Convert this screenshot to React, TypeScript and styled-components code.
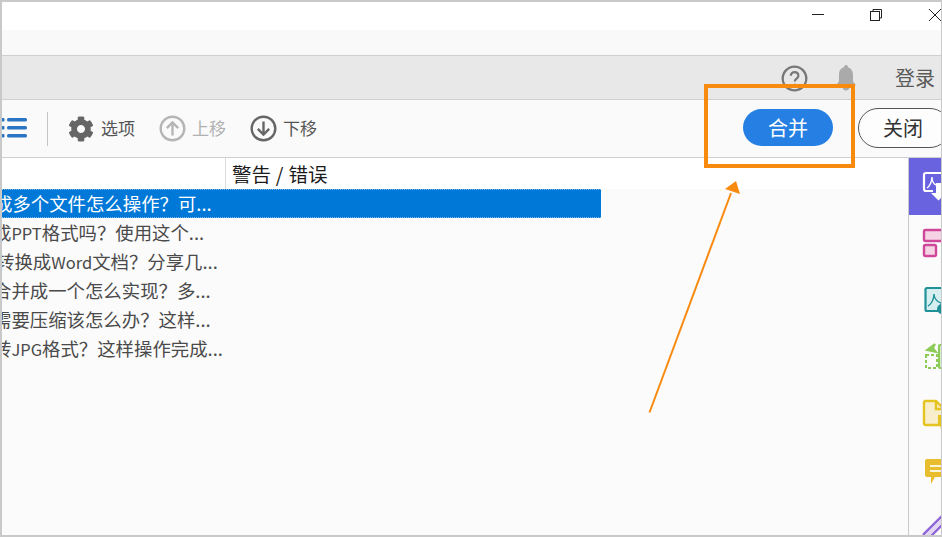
import React from "react";
import styled, { createGlobalStyle } from "styled-components";
import { FaCog } from "react-icons/fa";

const FONT = `"Noto Sans CJK SC", "Noto Sans", sans-serif`;

const GlobalStyle = createGlobalStyle`
  html, body {
    margin: 0;
    padding: 0;
    background: #fff;
    overflow: hidden;
  }
`;

const styles = {
  Frame: styled.div`
    position: relative;
    width: 942px;
    height: 537px;
    box-sizing: border-box;
    border-top: 2px solid #c9c9c9;
    border-left: 2px solid #c9c9c9;
    border-right: 1px solid #c9c9c9;
    border-bottom: 2px solid #c9c9c9;
    display: flex;
    flex-direction: column;
    overflow: hidden;
    font-family: ${FONT};
    background: #fbfbfb;
  `,
  TitleBar: styled.div`
    height: 28px;
    flex: none;
    background: #fff;
    display: flex;
    justify-content: flex-end;
  `,
  WinButton: styled.div<{ $width: number }>`
    width: ${p => p.$width}px;
    height: 28px;
    display: flex;
    align-items: flex-start;
    padding-top: 6px;
    box-sizing: border-box;
  `,
  MenuBar: styled.div`
    height: 26px;
    flex: none;
    box-sizing: border-box;
    background: #f9f9f9;
    border-bottom: 1px solid #cfcfcf;
  `,
  UserBar: styled.div`
    height: 44px;
    flex: none;
    box-sizing: border-box;
    background: #e8e8e8;
    border-bottom: 1px solid #cfcfcf;
    display: flex;
    align-items: center;
    justify-content: flex-end;
    padding-right: 6px;
    padding-top: 1px;
  `,
  Login: styled.span`
    font-size: 20px;
    color: #5a5a5a;
    margin-left: 38px;
    line-height: 44px;
    margin-top: -1px;
  `,
  BellSlot: styled.div`
    margin-left: 27px;
    display: flex;
  `,
  Toolbar: styled.div`
    height: 58px;
    flex: none;
    box-sizing: border-box;
    background: #fafafa;
    border-bottom: 1px solid #cfcfcf;
    display: flex;
    align-items: center;
  `,
  Divider: styled.div`
    width: 1px;
    height: 34px;
    background: #c4c4c4;
    margin: 0 20px 0 20px;
  `,
  ToolItem: styled.div<{ $disabled?: boolean }>`
    display: flex;
    align-items: center;
    gap: 6px;
    margin-right: 24px;
    font-size: 17px;
    line-height: 24px;
    color: ${p => (p.$disabled ? "#b0b0b0" : "#555")};
    span {
      margin-top: -2px;
    }
  `,
  Gear: styled(FaCog)`
    margin-right: 1px;
  `,
  Spacer: styled.div`
    flex: 1;
  `,
  MergeButton: styled.div`
    width: 90px;
    height: 37px;
    border-radius: 19px;
    background: #2680e3;
    color: #fff;
    font-size: 20px;
    display: flex;
    align-items: center;
    justify-content: center;
    flex: none;
    margin-top: -2px;
    padding-bottom: 1px;
    box-sizing: border-box;
  `,
  CloseButton: styled.div`
    width: 92px;
    height: 40px;
    flex: none;
    box-sizing: border-box;
    border: 1.5px solid #555;
    border-radius: 20px;
    background: #fdfdfd;
    color: #333;
    font-size: 20px;
    display: flex;
    align-items: center;
    justify-content: center;
    margin-left: 25px;
    margin-right: -9px;
    margin-top: -1px;
    padding: 0 2px 2px 0;
  `,
  Body: styled.div`
    flex: 1;
    display: flex;
    min-height: 0;
  `,
  Main: styled.div`
    flex: 1;
    display: flex;
    flex-direction: column;
    min-width: 0;
  `,
  HeaderRow: styled.div`
    height: 31px;
    flex: none;
    background: #fff;
    display: flex;
  `,
  NameColumn: styled.div`
    width: 224px;
    flex: none;
    box-sizing: border-box;
    border-right: 1px solid #dcdcdc;
  `,
  StatusColumn: styled.div`
    font-size: 19.5px;
    color: #1a1a1a;
    padding-left: 6px;
    line-height: 31px;
    white-space: pre;
    word-spacing: 0.5px;
  `,
  Row: styled.div<{ $selected?: boolean }>`
    width: 599px;
    height: 29px;
    box-sizing: border-box;
    overflow: hidden;
    white-space: nowrap;
    font-size: 18.4px;
    line-height: 26px;
    color: ${p => (p.$selected ? "#fff" : "#4a4a4a")};
    background: ${p => (p.$selected ? "#0078d7" : "transparent")};
    border-top: 1px ${p => (p.$selected ? "dotted #7fb8e6" : "solid transparent")};
    border-bottom: 1px ${p => (p.$selected ? "dotted #7fb8e6" : "solid transparent")};
  `,
  RowText: styled.span<{ $offset: number }>`
    display: inline-block;
    margin-left: ${p => p.$offset}px;
  `,
  Latin: styled.span`
    font-size: 16.5px;
  `,
  Rail: styled.div`
    width: 32px;
    flex: none;
    border-left: 1px solid #c9c9c9;
    background: #fbfbfb;
    display: flex;
    flex-direction: column;
    overflow: hidden;
  `,
  RailCell: styled.div<{ $active?: boolean }>`
    height: 57.4px;
    flex: none;
    background: ${p => (p.$active ? "#6a63e0" : "transparent")};
    svg {
      display: block;
    }
  `,
  Callout: styled.div`
    position: absolute;
    left: 702px;
    top: 82px;
    width: 151px;
    height: 84px;
    box-sizing: border-box;
    border: 4px solid #f98a10;
    pointer-events: none;
  `,
  Arrow: styled.svg`
    position: absolute;
    left: -2px;
    top: -2px;
    pointer-events: none;
  `
};

const rows = [
  { text: "成多个文件怎么操作\uFF1F可...", offset: -8, selected: true },
  { text: "成PPT格式吗\uFF1F使用这个...", offset: -9 },
  { text: "转换成Word文档\uFF1F分享几...", offset: -6 },
  { text: "合并成一个怎么实现\uFF1F多...", offset: -9 },
  { text: "需要压缩该怎么办\uFF1F这样...", offset: -9 },
  { text: "转JPG格式\uFF1F这样操作完成...", offset: -9 }
];

const CircleArrow = ({ color, up }: { color: string; up?: boolean }) => (
  <svg width="27" height="27" viewBox="0 0 27 27" fill="none" stroke={color}>
    <circle cx="13.5" cy="13.5" r="11.8" strokeWidth="2.4" />
    <g strokeWidth="2.4" transform={up ? "rotate(180 13.5 13.5)" : undefined}>
      <path d="M13.5 6.5v13" />
      <path d="M7.8 13.8l5.7 5.7 5.7-5.7" />
    </g>
  </svg>
);

// cell coordinates: x from the rail's left edge, y from the top of the cell
const RailIcons = [
  <svg width="33" height="57" fill="none" key="a">
    <path d="M33 15H17a2 2 0 0 0-2 2v14a2 2 0 0 0 2 2h7" stroke="#fff" strokeWidth="2.2" />
    <path d="M18 30c3-2 5-7 5-11 0 4 2 7 4 8" stroke="#fff" strokeWidth="1.4" />
    <path d="M27 25h6v10h4l-7.5 7.5L22 35h5z" fill="#fff" />
  </svg>,
  <svg width="33" height="57" key="b">
    <rect x="15" y="15" width="30" height="11" rx="1.5" fill="#f6d3e4" stroke="#d0479a" strokeWidth="2.4" />
    <rect x="15" y="30" width="12" height="11" rx="1.5" fill="#f6d3e4" stroke="#d0479a" strokeWidth="2.4" />
  </svg>,
  <svg width="33" height="57" fill="none" key="c">
    <rect x="16.5" y="15" width="24" height="23" rx="1.5" fill="#d6eef0" stroke="#1f9299" strokeWidth="2.2" />
    <path d="M19 33c4-2 6-8 6-12 0 4 3 8 7 9" stroke="#1f9299" strokeWidth="1.4" />
    <circle cx="33" cy="36" r="5" fill="#1f9299" />
  </svg>,
  <svg width="33" height="57" fill="none" key="d">
    <rect x="17" y="25" width="11" height="13" stroke="#8ccb58" strokeWidth="2" strokeDasharray="3 2" />
    <rect x="30" y="15" width="10" height="23" rx="1" fill="#d8efc3" stroke="#8ccb58" strokeWidth="2" />
    <path d="M26 14l-8 6 9 2-3-4z" fill="#8ccb58" stroke="#8ccb58" strokeWidth="2" />
  </svg>,
  <svg width="33" height="57" key="e">
    <path d="M16 13h11l8 8v16H17a2 2 0 0 1-2-2V14z" fill="#f8eecb" stroke="#e6c41f" strokeWidth="2.4" />
    <path d="M27 13v8h8" fill="none" stroke="#e6c41f" strokeWidth="2.4" />
    <path d="M29 27h6v12l-3 2-1-4h-2z" fill="#e6c41f" />
  </svg>,
  <svg width="33" height="57" key="f">
    <path d="M18 14h20v18H26l-4 7v-7h-4a2 2 0 0 1-2-2V16a2 2 0 0 1 2-2z" fill="#e8bd2e" />
    <path d="M21 21h14M21 26h14" stroke="#fbf4d8" strokeWidth="2.2" />
  </svg>,
  <svg width="33" height="57" fill="none" key="g">
    <path d="M14 33l20-20" stroke="#8f67d8" strokeWidth="2.5" />
    <path d="M21 35l13-13" stroke="#8f67d8" strokeWidth="2.5" />
    <path d="M17.5 34l17-17" stroke="#e2d6f5" strokeWidth="3.5" />
  </svg>
];

const rowParts = (text: string) =>
  text.split(/([A-Za-z]+)/).map((part, i) =>
    i % 2 ? <styles.Latin key={i}>{part}</styles.Latin> : part
  );

export default function App() {
  return (
    <styles.Frame>
      <GlobalStyle />
      <styles.TitleBar>
        <styles.WinButton $width={58}>
          <svg width="14" height="14" stroke="#222" fill="none">
            <path d="M1 6.5h12" />
          </svg>
        </styles.WinButton>
        <styles.WinButton $width={59}>
          <svg width="14" height="14" stroke="#222" fill="none">
            <rect x="1.5" y="3.5" width="9" height="9" />
            <path d="M4 3V1.5h8.5V10H11" />
          </svg>
        </styles.WinButton>
        <styles.WinButton $width={13}>
          <svg width="14" height="14" stroke="#222" fill="none">
            <path d="M1 1l12 12M13 1L1 13" />
          </svg>
        </styles.WinButton>
      </styles.TitleBar>
      <styles.MenuBar />
      <styles.UserBar>
        <svg width="27" height="27" viewBox="0 0 27 27" fill="none">
          <circle cx="13.5" cy="13.5" r="11.8" stroke="#777" strokeWidth="2.3" />
          <path d="M9.8 10.8c0-5 7.6-5 7.6 0 0 3-3.6 2.8-3.6 5.7" stroke="#777" strokeWidth="2.2" />
          <circle cx="13.8" cy="20" r="1.5" fill="#777" />
        </svg>
        <styles.BellSlot>
          <svg width="22" height="26" viewBox="0 0 22 26" fill="#aaaaaa">
            <path d="M11 0c1.5 0 2 1 2 2.2 3.5 1 5 4 5 8v5c0 2 2 3.5 3 5H1c1-1.5 3-3 3-5v-5c0-4.2 1.5-7.2 5-8C9 1 9.5 0 11 0z" />
            <path d="M7.5 22h7c0 2-1.5 3.5-3.5 3.5S7.5 24 7.5 22z" />
          </svg>
        </styles.BellSlot>
        <styles.Login>登录</styles.Login>
      </styles.UserBar>
      <styles.Toolbar>
        <svg width="25" height="24" viewBox="0 0 25 24" fill="#2a74c4">
          <rect x="-1" y="1" width="3.5" height="3.5" rx="1" />
          <rect x="-1" y="9" width="3.5" height="3.5" rx="1" />
          <rect x="-1" y="17" width="3.5" height="3.5" rx="1" />
          <rect x="5" y="1" width="20" height="3.5" rx="1.5" />
          <rect x="5" y="9" width="20" height="3.5" rx="1.5" />
          <rect x="5" y="17" width="20" height="3.5" rx="1.5" />
        </svg>
        <styles.Divider />
        <styles.ToolItem>
          <styles.Gear size={26} color="#666" />
          <span>选项</span>
        </styles.ToolItem>
        <styles.ToolItem $disabled>
          <CircleArrow color="#b5b5b5" up />
          <span>上移</span>
        </styles.ToolItem>
        <styles.ToolItem>
          <CircleArrow color="#666" />
          <span>下移</span>
        </styles.ToolItem>
        <styles.Spacer />
        <styles.MergeButton>合并</styles.MergeButton>
        <styles.CloseButton>关闭</styles.CloseButton>
      </styles.Toolbar>
      <styles.Body>
        <styles.Main>
          <styles.HeaderRow>
            <styles.NameColumn />
            <styles.StatusColumn>警告 / 错误</styles.StatusColumn>
          </styles.HeaderRow>
          {rows.map(row => (
            <styles.Row key={row.text} $selected={row.selected}>
              <styles.RowText $offset={row.offset}>{rowParts(row.text)}</styles.RowText>
            </styles.Row>
          ))}
        </styles.Main>
        <styles.Rail>
          {RailIcons.map((icon, i) => (
            <styles.RailCell key={i} $active={i === 0}>
              {icon}
            </styles.RailCell>
          ))}
        </styles.Rail>
      </styles.Body>
      <styles.Callout />
      <styles.Arrow width="942" height="537" fill="none">
        <path d="M649.5 412.5L731 193" stroke="#f98a10" strokeWidth="2" />
        <path d="M736 181L725 189L740 194Z" fill="#f98a10" />
      </styles.Arrow>
    </styles.Frame>
  );
}
